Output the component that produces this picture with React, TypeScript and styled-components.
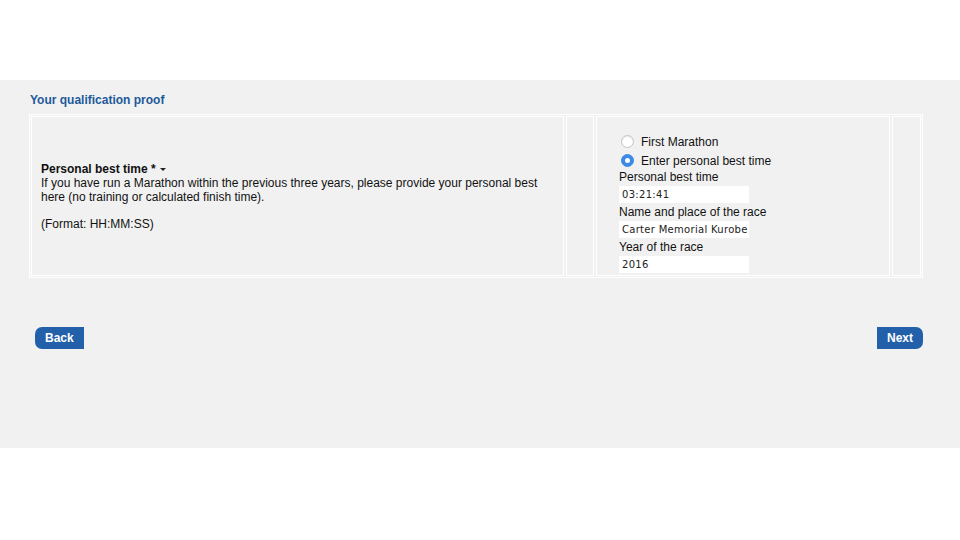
import styled, { createGlobalStyle } from 'styled-components';

const GlobalStyle = createGlobalStyle`
    body {
        margin: 0;
        background: #ffffff;
        font-family: "Liberation Sans", Arial, sans-serif;
        color: #111;
    }
`

const Page = styled.div`
    padding-top: 80px;
    height: 540px;
    box-sizing: border-box;
`

const Band = styled.div`
    background: #f1f1f1;
    height: 368px;
    padding: 13px 37px 0 29px;
    box-sizing: border-box;
`

const SectionTitle = styled.div`
    color: #22599a;
    font-weight: bold;
    font-size: 12px;
    line-height: 14px;
    padding-left: 1px;
    margin-bottom: 7px;
`

const Table = styled.div`
    display: grid;
    grid-template-columns: 533px 28px 294px 29px;
    gap: 2px;
    padding: 1px;
    border: 1px solid #ffffff;
    width: 894px;
    box-sizing: border-box;
`

const Cell = styled.div`
    border: 1px solid #ffffff;
    box-sizing: border-box;
`

const Question = styled.div`
    font-size: 12px;
    line-height: 14px;
    display: flex;
    flex-direction: column;
    justify-content: center;
    padding: 0 9px;
    border: 1px solid #ffffff;
    box-sizing: border-box;
`

const QuestionTitle = styled.div`
    font-weight: bold;
    display: flex;
    align-items: center;
    gap: 4px;
`

const Caret = styled.span`
    display: inline-block;
    width: 0;
    height: 0;
    border-left: 3px solid transparent;
    border-right: 3px solid transparent;
    border-top: 3px solid #222;
    margin-top: 2px;
`

const Format = styled.div`
    margin-top: 13px;
`

const Options = styled.div`
    display: flex;
    flex-direction: column;
    padding: 15px 0 0 22px;
    font-size: 12px;
`

const RadioRow = styled.label`
    display: flex;
    align-items: center;
    gap: 7px;
    height: 19px;
    padding-left: 2px;
`

const Radio = styled.span<{ $checked?: boolean }>`
    width: 13px;
    height: 13px;
    border-radius: 50%;
    box-sizing: border-box;
    background: ${p => p.$checked ? '#3d8ae6' : '#ffffff'};
    border: 1px solid ${p => p.$checked ? '#3d8ae6' : '#c4c4c4'};
    box-shadow: ${p => p.$checked ? 'none' : 'inset 0 1px 1px rgba(0,0,0,0.1)'};
    display: flex;
    align-items: center;
    justify-content: center;
    &::after {
        content: '';
        display: ${p => p.$checked ? 'block' : 'none'};
        width: 5px;
        height: 5px;
        border-radius: 50%;
        background: #ffffff;
    }
`

const FieldLabel = styled.div`
    line-height: 14px;
`

const Input = styled.div`
    width: 130px;
    height: 17px;
    background: #ffffff;
    font-family: "DejaVu Sans", sans-serif;
    font-size: 10px;
    letter-spacing: 0.3px;
    line-height: 17px;
    padding-left: 3px;
    box-sizing: border-box;
    margin: 2px 0 2px;
    color: #222;
    white-space: nowrap;
    overflow: hidden;
`

const Buttons = styled.div`
    display: flex;
    justify-content: space-between;
    margin-top: 49px;
    padding-left: 6px;
    width: 894px;
    box-sizing: border-box;
`

const NavButton = styled.button<{ $side: 'left' | 'right' }>`
    background: #2261aa;
    color: #ffffff;
    border: none;
    font-family: "Liberation Sans", Arial, sans-serif;
    font-weight: bold;
    font-size: 12px;
    height: 22px;
    padding: 0 10px;
    border-radius: ${p => p.$side === 'left' ? '7px 0 0 7px' : '0 7px 7px 0'};
    cursor: pointer;
`

const App = () => {
    return (
        <Page>
            <GlobalStyle />
            <Band>
                <SectionTitle>Your qualification proof</SectionTitle>
                <Table>
                    <Question>
                        <QuestionTitle>Personal best time * <Caret /></QuestionTitle>
                        <div>If you have run a Marathon within the previous three years, please provide your personal best here (no training or calculated finish time).</div>
                        <Format>(Format: HH:MM:SS)</Format>
                    </Question>
                    <Cell />
                    <Cell>
                        <Options>
                            <RadioRow><Radio />First Marathon</RadioRow>
                            <RadioRow><Radio $checked />Enter personal best time</RadioRow>
                            <FieldLabel>Personal best time</FieldLabel>
                            <Input>03:21:41</Input>
                            <FieldLabel>Name and place of the race</FieldLabel>
                            <Input>Carter Memorial Kurobe</Input>
                            <FieldLabel>Year of the race</FieldLabel>
                            <Input>2016</Input>
                        </Options>
                    </Cell>
                    <Cell />
                </Table>
                <Buttons>
                    <NavButton $side="left">Back</NavButton>
                    <NavButton $side="right">Next</NavButton>
                </Buttons>
            </Band>
        </Page>
    )
}

export default App
